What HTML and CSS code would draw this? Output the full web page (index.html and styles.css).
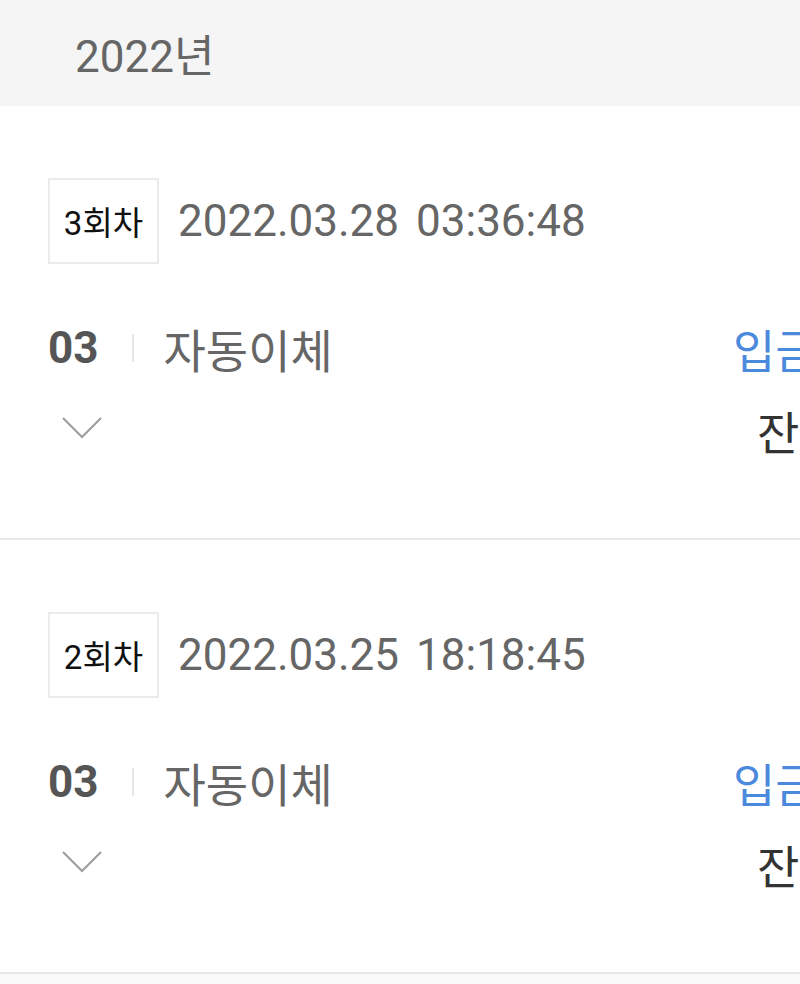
FILE: index.html
```html
<!DOCTYPE html>
<html lang="ko">
<head>
    <meta charset="UTF-8">
    <meta name="viewport" content="width=device-width, initial-scale=1.0">
    <title>입금 내역</title>
    <link rel="stylesheet" href="styles.css">
</head>
<body>
    <div class="year-header">2022년</div>

    <div class="record">
        <div class="record-head">
            <span class="round-badge">3회차</span>
            <span class="record-date">2022.03.28</span>
            <span class="record-time">03:36:48</span>
        </div>
        <div class="record-body">
            <div class="record-left">
                <div class="record-line">
                    <span class="day">03</span>
                    <span class="divider"></span>
                    <span class="method">자동이체</span>
                </div>
                <div class="record-line">
                    <svg class="chevron" width="40" height="22" viewBox="0 0 40 22">
                        <polyline points="1,1 20,20 39,1" fill="none" stroke="#9c9c9c" stroke-width="2"/>
                    </svg>
                </div>
            </div>
            <div class="record-right">
                <div class="record-line type">입금 10,000원</div>
                <div class="record-line balance">잔액 30,000원</div>
            </div>
        </div>
    </div>

    <div class="record">
        <div class="record-head">
            <span class="round-badge">2회차</span>
            <span class="record-date">2022.03.25</span>
            <span class="record-time">18:18:45</span>
        </div>
        <div class="record-body">
            <div class="record-left">
                <div class="record-line">
                    <span class="day">03</span>
                    <span class="divider"></span>
                    <span class="method">자동이체</span>
                </div>
                <div class="record-line">
                    <svg class="chevron" width="40" height="22" viewBox="0 0 40 22">
                        <polyline points="1,1 20,20 39,1" fill="none" stroke="#9c9c9c" stroke-width="2"/>
                    </svg>
                </div>
            </div>
            <div class="record-right">
                <div class="record-line type">입금 10,000원</div>
                <div class="record-line balance">잔액 20,000원</div>
            </div>
        </div>
    </div>
</body>
</html>
```

FILE: styles.css
```css
* {
    margin: 0;
    padding: 0;
    box-sizing: border-box;
}

body {
    font-family: Roboto, "Noto Sans CJK KR", sans-serif;
    background: #fafafa;
    color: #333;
    overflow-x: hidden;
}

.year-header {
    height: 106px;
    background: #f5f5f5;
    color: #666;
    font-size: 44px;
    padding-left: 75px;
    display: flex;
    align-items: center;
}

.record {
    height: 434px;
    background: #fff;
    border-bottom: 2px solid #e8e8e8;
    padding: 72px 0 0 48px;
    overflow: hidden;
}

.record-head {
    display: flex;
    align-items: center;
    color: #666;
    font-size: 44px;
}

.round-badge {
    width: 111px;
    height: 86px;
    border: 2px solid #ebebeb;
    display: flex;
    align-items: center;
    justify-content: center;
    font-size: 33px;
    color: #111;
    margin-right: 19px;
}

.record-time {
    margin-left: 17px;
}

.record-body {
    display: grid;
    grid-template-columns: 685px 240px;
    margin-top: 54px;
}

.record-line {
    height: 60px;
    display: flex;
    align-items: center;
    font-size: 44px;
    white-space: nowrap;
    margin-bottom: 22px;
}

.day {
    font-weight: bold;
    color: #555;
}

.divider {
    width: 2px;
    height: 28px;
    background: #e6e6e6;
    margin: 0 30px 0 33px;
}

.method {
    color: #666;
    font-size: 46px;
}

.chevron {
    margin-left: 14px;
    margin-top: -4px;
}

.type {
    color: #4a89dc;
    font-size: 46px;
}

.balance {
    color: #333;
    font-size: 46px;
    padding-left: 24px;
}
```
